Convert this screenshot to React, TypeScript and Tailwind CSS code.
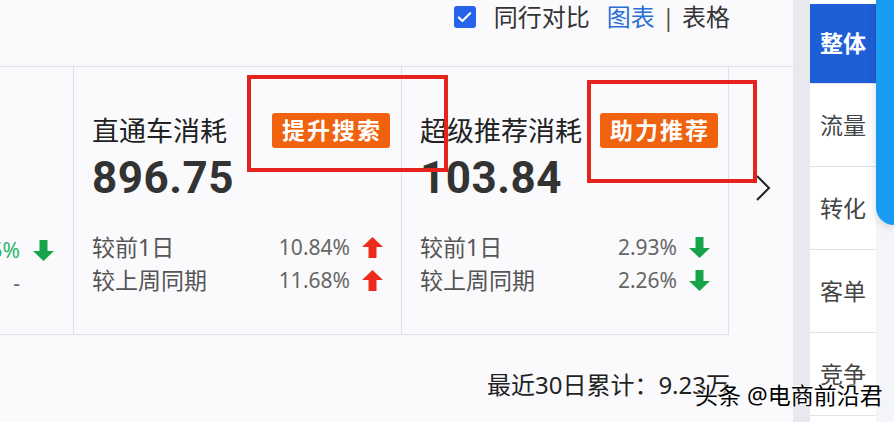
import { Check } from 'lucide-react'

const cjk = { fontFamily: '"Noto Sans", "Noto Sans CJK SC", sans-serif' }

function Arrow({ dir }: { dir: 'up' | 'down' }) {
  const color = dir === 'up' ? '#ee2b1b' : '#16a34a'
  return (
    <svg width="21" height="21" viewBox="0 0 21 21" className="flex-none">
      {dir === 'up' ? (
        <polygon points="10.5,0 21,10 14.5,10 14.5,21 6.5,21 6.5,10 0,10" fill={color} />
      ) : (
        <polygon points="6.5,0 14.5,0 14.5,11 21,11 10.5,21 0,11 6.5,11" fill={color} />
      )}
    </svg>
  )
}

type Row = { label: string; value: string; dir: 'up' | 'down' }

const cards = [
  {
    title: '直通车消耗',
    badge: '提升搜索',
    value: '896.75',
    rows: [
      { label: '较前1日', value: '10.84%', dir: 'up' },
      { label: '较上周同期', value: '11.68%', dir: 'up' },
    ] as Row[],
    width: 'w-[328px]',
  },
  {
    title: '超级推荐消耗',
    badge: '助力推荐',
    value: '103.84',
    rows: [
      { label: '较前1日', value: '2.93%', dir: 'down' },
      { label: '较上周同期', value: '2.26%', dir: 'down' },
    ] as Row[],
    width: 'w-[327px]',
  },
]

const tabs = ['整体', '流量', '转化', '客单', '竞争']

export default function App() {
  return (
    <div className="relative w-[894px] h-[422px] overflow-hidden bg-[#fafafc] flex text-[#333]" style={cjk}>
      {/* 主体 */}
      <div className="w-[793px] flex flex-col">
        {/* 顶部操作 */}
        <div className="h-[67px] flex-none border-b border-[#dfe1e6] flex items-start justify-end pr-[63px] pt-[4px]">
          <div className="flex items-center h-[26px] text-[24px] leading-none">
            <span className="w-[22px] h-[22px] rounded-[3px] bg-[#2563eb] flex items-center justify-center mr-[18px]">
              <Check className="w-[17px] h-[17px] text-white" strokeWidth={3} />
            </span>
            <span className="text-[#333]">同行对比</span>
            <span className="ml-[17px] text-[#2a6fd6]">图表</span>
            <span className="mx-[7px] text-[#555]">|</span>
            <span className="text-[#333]">表格</span>
          </div>
        </div>

        {/* 指标卡片 */}
        <div className="flex h-[268px] flex-none">
          <div className="w-[74px] flex-none border-r border-b border-[#dfe1e6] flex flex-col items-end pr-[19px] pt-[167px] text-[21px] leading-[33px]">
            <div className="flex items-center gap-[13px]">
              <span className="text-[#2bb36a]">5%</span>
              <Arrow dir="down" />
            </div>
            <div className="flex items-center gap-[13px]">
              <span className="text-[#666]">-</span>
              <span className="w-[21px]" />
            </div>
          </div>

          {cards.map((c) => (
            <div key={c.title} className={`${c.width} flex-none border-r border-b border-[#dfe1e6] px-[18px] pt-[44px] flex flex-col`}>
              <div className="flex items-center h-[38px] whitespace-nowrap">
                <span className="w-[180px] flex-none text-[27px] leading-none text-[#222]">{c.title}</span>
                <span className="flex-none h-[35px] pl-[10px] pr-[8px] rounded-[3px] bg-[#f1620f] text-white font-bold text-[23px] leading-[35px] tracking-[2px]">
                  {c.badge}
                </span>
              </div>
              <div className="mt-[5px] text-[44px] leading-[48px] font-bold text-[#333] tracking-[0.5px]" style={{ fontFamily: 'Roboto, "Noto Sans", sans-serif' }}>
                {c.value}
              </div>
              <div className="mt-[29px] flex flex-col">
                {c.rows.map((r) => (
                  <div key={r.label} className="flex items-center justify-between h-[33px]">
                    <span className="text-[23px] text-[#555]">{r.label}</span>
                    <div className="flex items-center gap-[12px]">
                      <span className="text-[21px] text-[#666]">{r.value}</span>
                      <Arrow dir={r.dir} />
                    </div>
                  </div>
                ))}
              </div>
            </div>
          ))}

          <div className="flex-1 flex items-start justify-start pl-[26px] pt-[108px]">
            <svg width="16" height="26" viewBox="0 0 16 26">
              <polyline points="2,1 14,13 2,25" fill="none" stroke="#222" strokeWidth="2" />
            </svg>
          </div>
        </div>

        {/* 底部累计 */}
        <div className="flex justify-end pr-[63px] pt-[38px]">
          <span className="text-[24px] leading-none text-[#222]">最近30日累计：9.23万</span>
        </div>
      </div>

      {/* 侧边栏 */}
      <div className="w-[17px] flex-none bg-[#e7e9ef]" />
      <div className="w-[66px] flex-none bg-white flex flex-col pt-[4px]">
        {tabs.map((t, i) => (
          <div
            key={t}
            className={`flex-none flex items-center justify-center text-[23px] ${
              i === 0 ? 'bg-[#1e5ed6] text-white font-bold h-[79px]' : 'h-[83px] border-t border-[#e2e4e8] text-[#444]'
            }`}
          >
            {t}
          </div>
        ))}
        <div className="border-t border-[#e2e4e8] flex-1" />
      </div>
      <div className="flex-1 flex flex-col bg-[#f4f5f8]">
        <div className="h-[225px] bg-[#1a9bf3] rounded-bl-[18px] shadow-[0_2px_8px_rgba(0,0,0,0.15)]" />
      </div>

      {/* 标注框 */}
      <div className="absolute left-[247px] top-[75px] w-[201px] h-[97px] border-[4px] border-[#e3231c]" />
      <div className="absolute left-[587px] top-[80px] w-[170px] h-[103px] border-[4px] border-[#e3231c]" />

      {/* 水印 */}
      <div
        className="absolute left-[695px] top-[384px] text-[23px] leading-none text-black whitespace-nowrap"
        style={{ textShadow: '0 0 2px #fff, 0 0 2px #fff, 0 0 3px #fff' }}
      >
        头条 @电商前沿君
      </div>
    </div>
  )
}
